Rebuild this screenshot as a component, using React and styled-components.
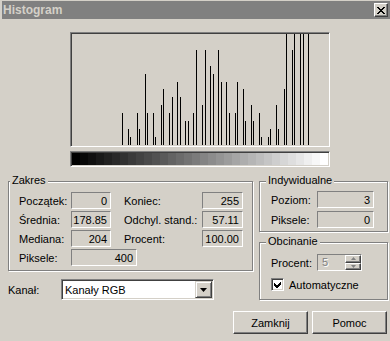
import styled, { createGlobalStyle } from "styled-components";

const GlobalStyle = createGlobalStyle`
  html, body {
    margin: 0;
    padding: 0;
    background: #d4d0c8;
  }
  body {
    font-family: "Liberation Sans", Arial, sans-serif;
    font-size: 11px;
    color: #000;
  }
`;

// x offset inside the 256px plot, height in px (max 111)
const BARS = [
  [50, 32], [56, 16], [58, 8], [65, 32], [67, 16], [73, 71], [75, 32],
  [81, 32], [83, 8], [89, 40], [91, 56], [97, 32], [100, 48], [105, 63],
  [108, 48], [113, 24], [116, 24], [121, 32], [124, 95], [130, 40],
  [133, 95], [138, 79], [141, 71], [146, 95], [149, 63], [154, 63],
  [157, 32], [163, 32], [165, 63], [171, 56], [173, 24], [179, 40],
  [181, 24], [187, 32], [189, 8], [196, 8], [198, 16], [204, 40],
  [206, 16], [212, 56], [214, 111], [220, 95], [222, 111], [228, 111],
  [231, 111], [236, 111],
];

const STEPS = 32;
const rampStops = Array.from({ length: STEPS }, (_, i) => {
  const v = Math.round((i * 255) / (STEPS - 1));
  const c = `rgb(${v},${v},${v})`;
  const a = (i * 100) / STEPS;
  const b = ((i + 1) * 100) / STEPS;
  return `${c} ${a}%, ${c} ${b}%`;
}).join(", ");

const Window = styled.div`
  width: 390px;
  height: 341px;
  box-sizing: border-box;
  padding-top: 1px;
  background: #d4d0c8;
  overflow: hidden;
`;

const TitleBar = styled.div`
  height: 18px;
  margin-left: 2px;
  padding: 0 2px 0 1px;
  background: #808080;
  display: flex;
  align-items: center;
  justify-content: space-between;
`;

const Title = styled.span`
  color: #d4d0c8;
  font-weight: bold;
  font-size: 12px;
`;

const CloseButton = styled.div`
  width: 14px;
  height: 14px;
  box-sizing: border-box;
  background: #d4d0c8;
  border: 1px solid;
  border-color: #fff #404040 #404040 #fff;
  box-shadow: inset -1px -1px 0 #808080;
  display: flex;
  align-items: center;
  justify-content: center;
`;

const Body = styled.div`
  padding: 13px 3px 0 8px;
`;

const Sunken = styled.div`
  box-sizing: border-box;
  width: 260px;
  height: ${(p) => p.$h}px;
  margin: ${(p) => p.$mt || 0}px 0 0 62px;
  padding: 1px;
  border: 1px solid;
  border-color: #808080 #fff #fff #808080;
  box-shadow: inset 1px 1px 0 #404040;
`;

const Ramp = styled.div`
  width: 256px;
  height: 12px;
  background: linear-gradient(to right, ${rampStops});
`;

const Lower = styled.div`
  display: grid;
  grid-template-columns: 245px 129px;
  column-gap: 6px;
  margin-top: 14px;
`;

const Column = styled.div`
  display: flex;
  flex-direction: column;
`;

const Group = styled.div`
  position: relative;
  box-sizing: border-box;
  height: ${(p) => p.$h}px;
  margin-top: ${(p) => p.$mt || 0}px;
  padding: ${(p) => p.$pad};
  border: 1px solid #808080;
  box-shadow: inset 1px 1px 0 #fff, 1px 1px 0 #fff;
`;

const Legend = styled.span`
  position: absolute;
  top: -8px;
  left: ${(p) => p.$left || 1}px;
  padding: 0 2px;
  line-height: 13px;
  background: #d4d0c8;
`;

const StatsGrid = styled.div`
  display: grid;
  grid-template-columns: ${(p) => p.$cols};
  grid-auto-rows: 17px;
  row-gap: ${(p) => p.$gap}px;
  align-items: center;
`;

const Label = styled.span`
  grid-column: ${(p) => p.$col || "auto"};
  white-space: nowrap;
`;

const Field = styled.div`
  box-sizing: border-box;
  width: ${(p) => (p.$w ? `${p.$w}px` : "100%")};
  height: 17px;
  grid-column: ${(p) => p.$span || "auto"};
  border: 1px solid;
  border-color: #808080 #fff #fff #808080;
  padding-right: 3px;
  text-align: right;
  line-height: 16px;
`;

const SpinField = styled.div`
  box-sizing: border-box;
  width: 45px;
  height: 17px;
  border: 1px solid;
  border-color: #808080 #fff #fff #808080;
  display: flex;
`;

const SpinValue = styled.span`
  flex: 1;
  padding-left: 4px;
  line-height: 15px;
  color: #808080;
  text-shadow: 1px 1px 0 #fff;
`;

const SpinButtons = styled.div`
  width: 16px;
  display: flex;
  flex-direction: column;
`;

const SpinButton = styled.div`
  flex: 1;
  box-sizing: border-box;
  border: 1px solid;
  border-color: #fff #404040 #404040 #fff;
  box-shadow: inset -1px -1px 0 #808080;
  display: flex;
  align-items: center;
  justify-content: center;
`;

const CheckRow = styled.div`
  display: flex;
  align-items: center;
  gap: 5px;
  margin-top: 7px;
`;

const CheckBox = styled.div`
  box-sizing: border-box;
  width: 13px;
  height: 13px;
  background: #fff;
  border: 1px solid;
  border-color: #808080 #fff #fff #808080;
  box-shadow: inset 1px 1px 0 #404040, inset -1px -1px 0 #d4d0c8;
  display: flex;
  align-items: center;
  justify-content: center;
`;

const ChannelRow = styled.div`
  display: flex;
  align-items: center;
  margin-top: 8px;
`;

const ChannelLabel = styled.span`
  width: 53px;
`;

const Select = styled.div`
  box-sizing: border-box;
  width: 153px;
  height: 21px;
  padding: 2px 2px 2px 3px;
  background: #fff;
  border: 1px solid;
  border-color: #808080 #fff #fff #808080;
  box-shadow: inset 1px 1px 0 #404040, inset -1px -1px 0 #d4d0c8;
  display: flex;
  align-items: center;
  justify-content: space-between;
`;

const ArrowButton = styled.div`
  box-sizing: border-box;
  width: 17px;
  height: 17px;
  margin-right: -1px;
  background: #d4d0c8;
  border: 1px solid;
  border-color: #d4d0c8 #404040 #404040 #d4d0c8;
  box-shadow: inset 1px 1px 0 #fff, inset -1px -1px 0 #808080;
  display: flex;
  align-items: center;
  justify-content: center;
`;

const Buttons = styled.div`
  display: flex;
  justify-content: flex-end;
  gap: 4px;
  margin-top: 11px;
`;

const Button = styled.div`
  box-sizing: border-box;
  width: 75px;
  height: 23px;
  border: 1px solid;
  border-color: #fff #404040 #404040 #fff;
  box-shadow: inset -1px -1px 0 #808080;
  display: flex;
  align-items: center;
  justify-content: center;
`;

const Histogram = () => (
  <svg width="256" height="111" style={{ display: "block" }} shapeRendering="crispEdges">
    {BARS.map(([x, h]) => (
      <rect key={x} x={x} y={111 - h} width="1" height={h} fill="#000" />
    ))}
  </svg>
);

const Arrow = ({ up, color = "#000", w = 7 }) => {
  const h = Math.ceil(w / 2);
  const pts = up
    ? `0,${h} ${w},${h} ${w / 2},0`
    : `0,0 ${w},0 ${w / 2},${h}`;
  return (
    <svg width={w} height={h} style={{ display: "block" }}>
      <polygon points={pts} fill={color} />
    </svg>
  );
};

export default function App() {
  return (
    <>
      <GlobalStyle />
      <Window>
        <TitleBar>
          <Title>Histogram</Title>
          <CloseButton>
            <svg width="8" height="7" style={{ display: "block" }} shapeRendering="crispEdges">
              <path d="M0 0h2l2 2.5L6 0h2L5 3.5 8 7H6L4 4.5 2 7H0l3-3.5z" fill="#000" />
            </svg>
          </CloseButton>
        </TitleBar>

        <Body>
          <Sunken $h={115}>
            <Histogram />
          </Sunken>
          <Sunken $h={16} $mt={4}>
            <Ramp />
          </Sunken>

          <Lower>
            <Column>
              <Group $h={90} $pad="10px 0 0 10px">
                <Legend>Zakres</Legend>
                <StatsGrid $cols="52px 40px 13px 78px 41px" $gap={2}>
                  <Label>Początek:</Label>
                  <Field>0</Field>
                  <Label $col={4}>Koniec:</Label>
                  <Field>255</Field>

                  <Label>Średnia:</Label>
                  <Field>178.85</Field>
                  <Label $col={4}>Odchyl. stand.:</Label>
                  <Field>57.11</Field>

                  <Label>Mediana:</Label>
                  <Field>204</Field>
                  <Label $col={4}>Procent:</Label>
                  <Field>100.00</Field>

                  <Label>Piksele:</Label>
                  <Field $w={66} $span="span 3">400</Field>
                </StatsGrid>
              </Group>

              <ChannelRow>
                <ChannelLabel>Kanał:</ChannelLabel>
                <Select>
                  <span>Kanały RGB</span>
                  <ArrowButton>
                    <Arrow />
                  </ArrowButton>
                </Select>
              </ChannelRow>
            </Column>

            <Column>
              <Group $h={51} $pad="9px 0 0 11px">
                <Legend $left={6}>Indywidualne</Legend>
                <StatsGrid $cols="46px 57px" $gap={3}>
                  <Label>Poziom:</Label>
                  <Field>3</Field>
                  <Label>Piksele:</Label>
                  <Field>0</Field>
                </StatsGrid>
              </Group>

              <Group $h={58} $mt={10} $pad="11px 0 0 11px">
                <Legend $left={6}>Obcinanie</Legend>
                <StatsGrid $cols="46px 45px" $gap={0}>
                  <Label>Procent:</Label>
                  <SpinField>
                    <SpinValue>5</SpinValue>
                    <SpinButtons>
                      <SpinButton>
                        <Arrow up w={5} color="#808080" />
                      </SpinButton>
                      <SpinButton>
                        <Arrow w={5} color="#808080" />
                      </SpinButton>
                    </SpinButtons>
                  </SpinField>
                </StatsGrid>
                <CheckRow>
                  <CheckBox>
                    <svg width="7" height="7" style={{ display: "block" }} shapeRendering="crispEdges">
                      <path d="M0 2v3l2 2h1l4-4V0L2.5 4.5z" fill="#000" />
                    </svg>
                  </CheckBox>
                  <span>Automatyczne</span>
                </CheckRow>
              </Group>
            </Column>
          </Lower>

          <Buttons>
            <Button>Zamknij</Button>
            <Button>Pomoc</Button>
          </Buttons>
        </Body>
      </Window>
    </>
  );
}
